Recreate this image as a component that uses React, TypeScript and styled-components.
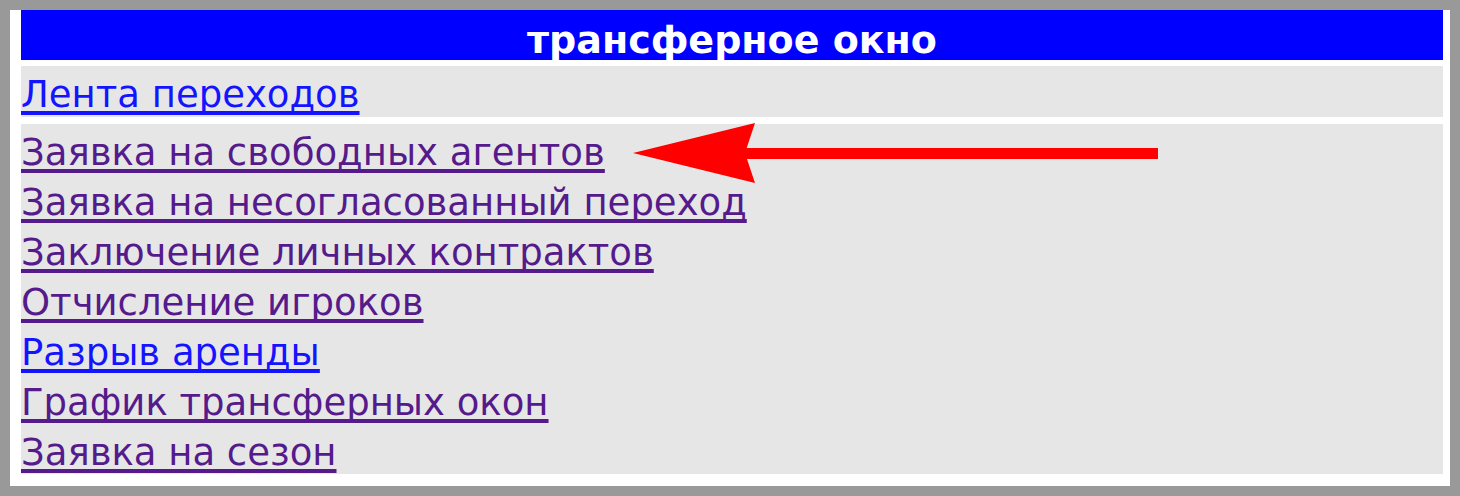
import styled, { createGlobalStyle } from "styled-components";

const GlobalStyle = createGlobalStyle`
  html, body {
    margin: 0;
    padding: 0;
  }
  body {
    background: #999999;
    font-family: "DejaVu Sans", Tahoma, Verdana, sans-serif;
  }
`;

const Frame = styled.div`
  width: 1460px;
  height: 496px;
  box-sizing: border-box;
  padding: 10px;
  background: #999999;
`;

const Panel = styled.div`
  position: relative;
  height: 100%;
  box-sizing: border-box;
  background: #ffffff;
  padding: 0 7px 14px 11px;
  display: flex;
  flex-direction: column;
`;

const Header = styled.div`
  height: 50px;
  line-height: 60px;
  background: #0000ff;
  color: #ffffff;
  text-align: center;
  font-weight: bold;
  font-size: 38px;
`;

const Block = styled.div<{ gap: number; extra?: number }>`
  margin-top: ${(p) => p.gap}px;
  padding-bottom: ${(p) => p.extra || 0}px;
  background: #e6e6e6;
  display: flex;
  flex-direction: column;
`;

const Line = styled.div`
  height: 50px;
  line-height: 58px;
  font-size: 37px;
  white-space: nowrap;
`;

const Link = styled.a<{ visited?: boolean }>`
  color: ${(p) => (p.visited ? "#551a8b" : "#1414ff")};
  text-decoration: underline;
  text-decoration-thickness: 4px;
  text-underline-offset: 4px;
  text-decoration-skip-ink: none;
  cursor: pointer;
`;

const Arrow = styled.svg`
  position: absolute;
  left: 610px;
  top: 105px;
`;

const feed = [{ text: "Лента переходов", visited: false }];

const links = [
  { text: "Заявка на свободных агентов", visited: true },
  { text: "Заявка на несогласованный переход", visited: true },
  { text: "Заключение личных контрактов", visited: true },
  { text: "Отчисление игроков", visited: true },
  { text: "Разрыв аренды", visited: false },
  { text: "График трансферных окон", visited: true },
  { text: "Заявка на сезон", visited: true },
];

function App() {
  return (
    <>
      <GlobalStyle />
      <Frame>
        <Panel>
          <Header>трансферное окно</Header>
          <Block gap={6} extra={1}>
            {feed.map((l) => (
              <Line key={l.text}>
                <Link visited={l.visited}>{l.text}</Link>
              </Line>
            ))}
          </Block>
          <Block gap={7}>
            {links.map((l) => (
              <Line key={l.text}>
                <Link visited={l.visited}>{l.text}</Link>
              </Line>
            ))}
          </Block>
          <Arrow width="550" height="80" viewBox="0 0 550 80">
            <polygon points="13,38 135,8 125,38 135,68" fill="#ff0000" />
            <rect x="120" y="33" width="418" height="11" fill="#ff0000" />
          </Arrow>
        </Panel>
      </Frame>
    </>
  );
}

export default App;
